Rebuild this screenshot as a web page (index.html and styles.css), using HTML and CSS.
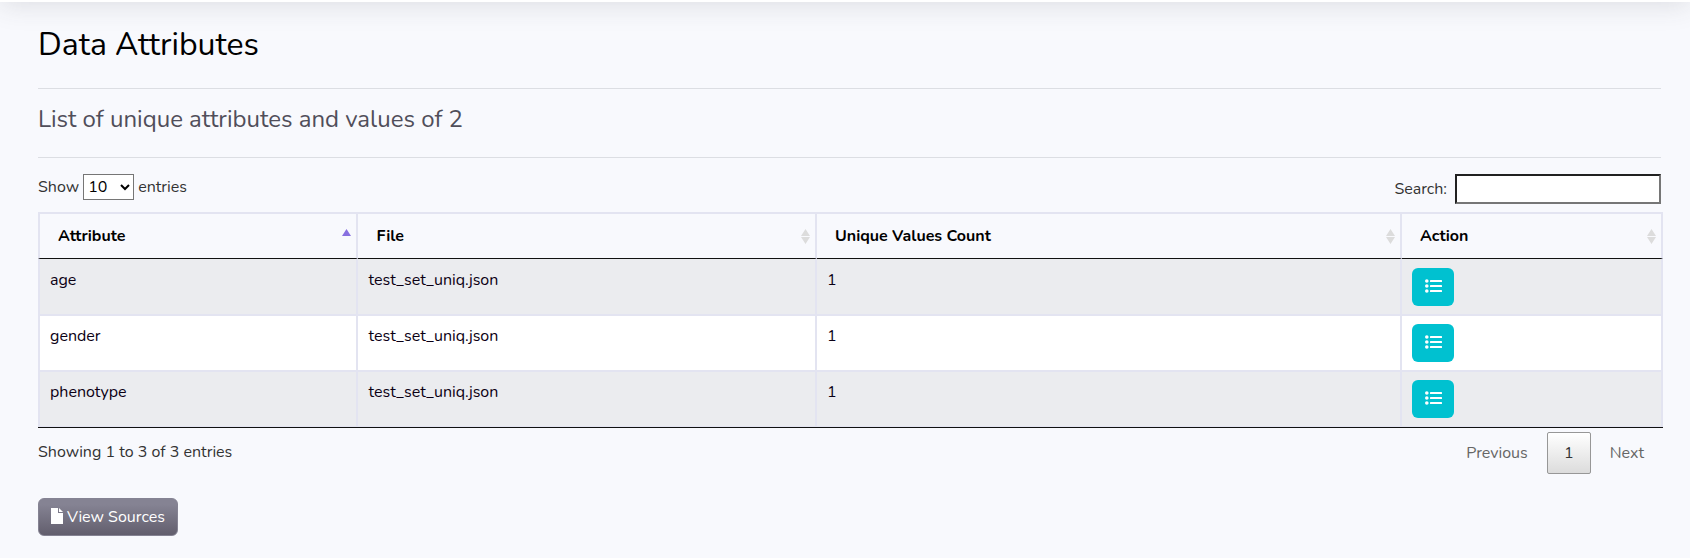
FILE: index.html
```
<!DOCTYPE html>
<html lang="en">
<head>
<meta charset="utf-8">
<title>Data Attributes</title>
<link rel="stylesheet" href="styles.css">
</head>
<body>
<svg class="sprite" aria-hidden="true">
  <symbol id="icon-list" viewBox="0 0 17 14">
    <circle cx="1.8" cy="2" r="1.8"/><circle cx="1.8" cy="7" r="1.8"/><circle cx="1.8" cy="12" r="1.8"/>
    <rect x="5" y="1" width="12" height="2" rx=".5"/><rect x="5" y="6" width="12" height="2" rx=".5"/><rect x="5" y="11" width="12" height="2" rx=".5"/>
  </symbol>
  <symbol id="icon-sort" viewBox="0 0 9 15">
    <path d="M4.5 0 9 7H0zM0 8h9l-4.5 7z"/>
  </symbol>
  <symbol id="icon-asc" viewBox="0 0 9 15">
    <path d="M4.5 0 9 7H0z"/>
  </symbol>
</svg>
<header class="topbar"></header>
<main class="content">
  <h1 class="title">Data Attributes</h1>
  <hr class="rule">
  <h4 class="subtitle">List of unique attributes and values of 2</h4>
  <hr class="rule">
  <div class="controls">
    <label class="length">Show <select class="length-select"><option>10</option><option>25</option></select> entries</label>
    <label class="filter">Search:<input class="filter-input" type="search"></label>
  </div>
  <table class="data">
    <colgroup><col class="col-attribute"><col class="col-file"><col class="col-count"><col class="col-action"></colgroup>
    <thead>
      <tr>
        <th><div class="head">Attribute<svg class="sort sort-active"><use href="#icon-asc"/></svg></div></th>
        <th><div class="head">File<svg class="sort"><use href="#icon-sort"/></svg></div></th>
        <th><div class="head">Unique Values Count<svg class="sort"><use href="#icon-sort"/></svg></div></th>
        <th><div class="head">Action<svg class="sort"><use href="#icon-sort"/></svg></div></th>
      </tr>
    </thead>
    <tbody>
      <tr><td>age</td><td>test_set_uniq.json</td><td>1</td><td><button class="btn-list" aria-label="List"><svg class="list-icon"><use href="#icon-list"/></svg></button></td></tr>
      <tr><td>gender</td><td>test_set_uniq.json</td><td>1</td><td><button class="btn-list" aria-label="List"><svg class="list-icon"><use href="#icon-list"/></svg></button></td></tr>
      <tr><td>phenotype</td><td>test_set_uniq.json</td><td>1</td><td><button class="btn-list" aria-label="List"><svg class="list-icon"><use href="#icon-list"/></svg></button></td></tr>
    </tbody>
  </table>
  <div class="footer">
    <div class="info">Showing 1 to 3 of 3 entries</div>
    <div class="pager"><a class="page">Previous</a><a class="page page-current">1</a><a class="page">Next</a></div>
  </div>
  <button class="btn-sources"><svg class="file-icon" viewBox="0 0 12 16"><path d="M0 0h7v5h5v11H0zM8 0l4 4H8z"/></svg>View Sources</button>
</main>
</body>
</html>
```
FILE: styles.css
```
* { box-sizing: border-box; }
body {
  margin: 0;
  height: 558px;
  overflow: hidden;
  background: #f8f9fd;
  color: #333;
  font: 16px/24px Nunito, "Open Sans", sans-serif;
}
.sprite { display: none; }
.topbar {
  height: 70px;
  margin-top: -68px;
  background: #fff;
  box-shadow: 0 .15rem 1.75rem 0 rgba(58, 59, 69, .15);
}
.content { padding: 24px 27px 0 38px; }
.title { margin: 0 0 24px; font-size: 32px; font-weight: 400; line-height: 38px; color: #000; }
.subtitle { margin: 0 0 24px; font-size: 24px; font-weight: 400; line-height: 28px; color: #504e5a; }
.rule { height: 1px; margin: 16px 2px 16px 0; border: 0; background: #dcdee3; }

.controls { display: flex; justify-content: space-between; align-items: flex-start; height: 38px; padding-right: 2px; }
.length { display: flex; align-items: center; gap: 4px; height: 26px; }
.length-select {
  width: 51px;
  height: 26px;
  padding: 0;
  border: 1px solid #767676;
  border-radius: 0;
  background-color: #fff;
  color: #000;
  font: inherit;
}
.filter { display: flex; align-items: center; gap: 8px; height: 30px; }
.filter-input { width: 206px; height: 30px; border: 2px inset #767676; border-radius: 0; background: #fff; font: inherit; }

.data { width: 1625px; table-layout: fixed; border-collapse: separate; border-spacing: 0; border-bottom: 1px solid #111; color: #0b0014; }
.col-attribute { width: 320px; }
.col-file { width: 459px; }
.col-count { width: 585px; }
.col-action { width: 261px; }
.data th, .data td { padding: 0 0 0 10px; border-right: 2px solid #e3e4f1; text-align: left; }
.data th:first-child, .data td:first-child { border-left: 2px solid #e3e4f1; }
.data th { height: 47px; padding: 0 5px 0 18px; border-top: 2px solid #e3e4f1; border-bottom: 1px solid #111; font-weight: 700; color: #000; }
.data th:nth-child(2) { padding-left: 18.5px; }
.data td:nth-child(2) { padding-left: 10.5px; }
.head { display: flex; align-items: center; justify-content: space-between; }
.sort { width: 9px; height: 15px; fill: #dcdcdc; }
.sort-active { fill: #8870e0; }
.data td { height: 56px; padding-top: 8px; border-bottom: 2px solid #e3e4f1; vertical-align: top; background: #fff; }
.data tbody tr:first-child td { height: 57px; padding-top: 9px; }
.data tbody tr:nth-child(odd) td { background: #ebecef; }
.data tbody tr:last-child td { height: 55px; border-bottom-width: 1px; }

.btn-list { display: flex; align-items: center; justify-content: center; width: 42px; height: 38px; padding: 0 0 2px; border: 0; border-radius: 6px; background: #00c1d0; }
.list-icon { width: 17px; height: 14px; fill: #fff; }

.footer { display: flex; justify-content: space-between; height: 70px; padding: 4px 2px 0 0; }
.info { padding-top: 8px; }
.pager { display: flex; gap: 2px; }
.page { height: 42px; padding: 9px 17px 7px; color: #666; }
.page-current { width: 44px; border: 1px solid #979797; border-radius: 2px; padding: 8px 0 6px; background: linear-gradient(#fff, #dcdcdc); color: #333; text-align: center; }

.btn-sources {
  display: flex;
  align-items: center;
  gap: 4px;
  width: 140px;
  height: 38px;
  padding: 0 0 0 12px;
  border: 1px solid #858393;
  border-radius: 6px;
  background: linear-gradient(#858393 15%, #625e6d);
  color: #fff;
  font: inherit;
}
.file-icon { width: 12px; height: 16px; margin-top: -2px; fill: #fff; }
```
